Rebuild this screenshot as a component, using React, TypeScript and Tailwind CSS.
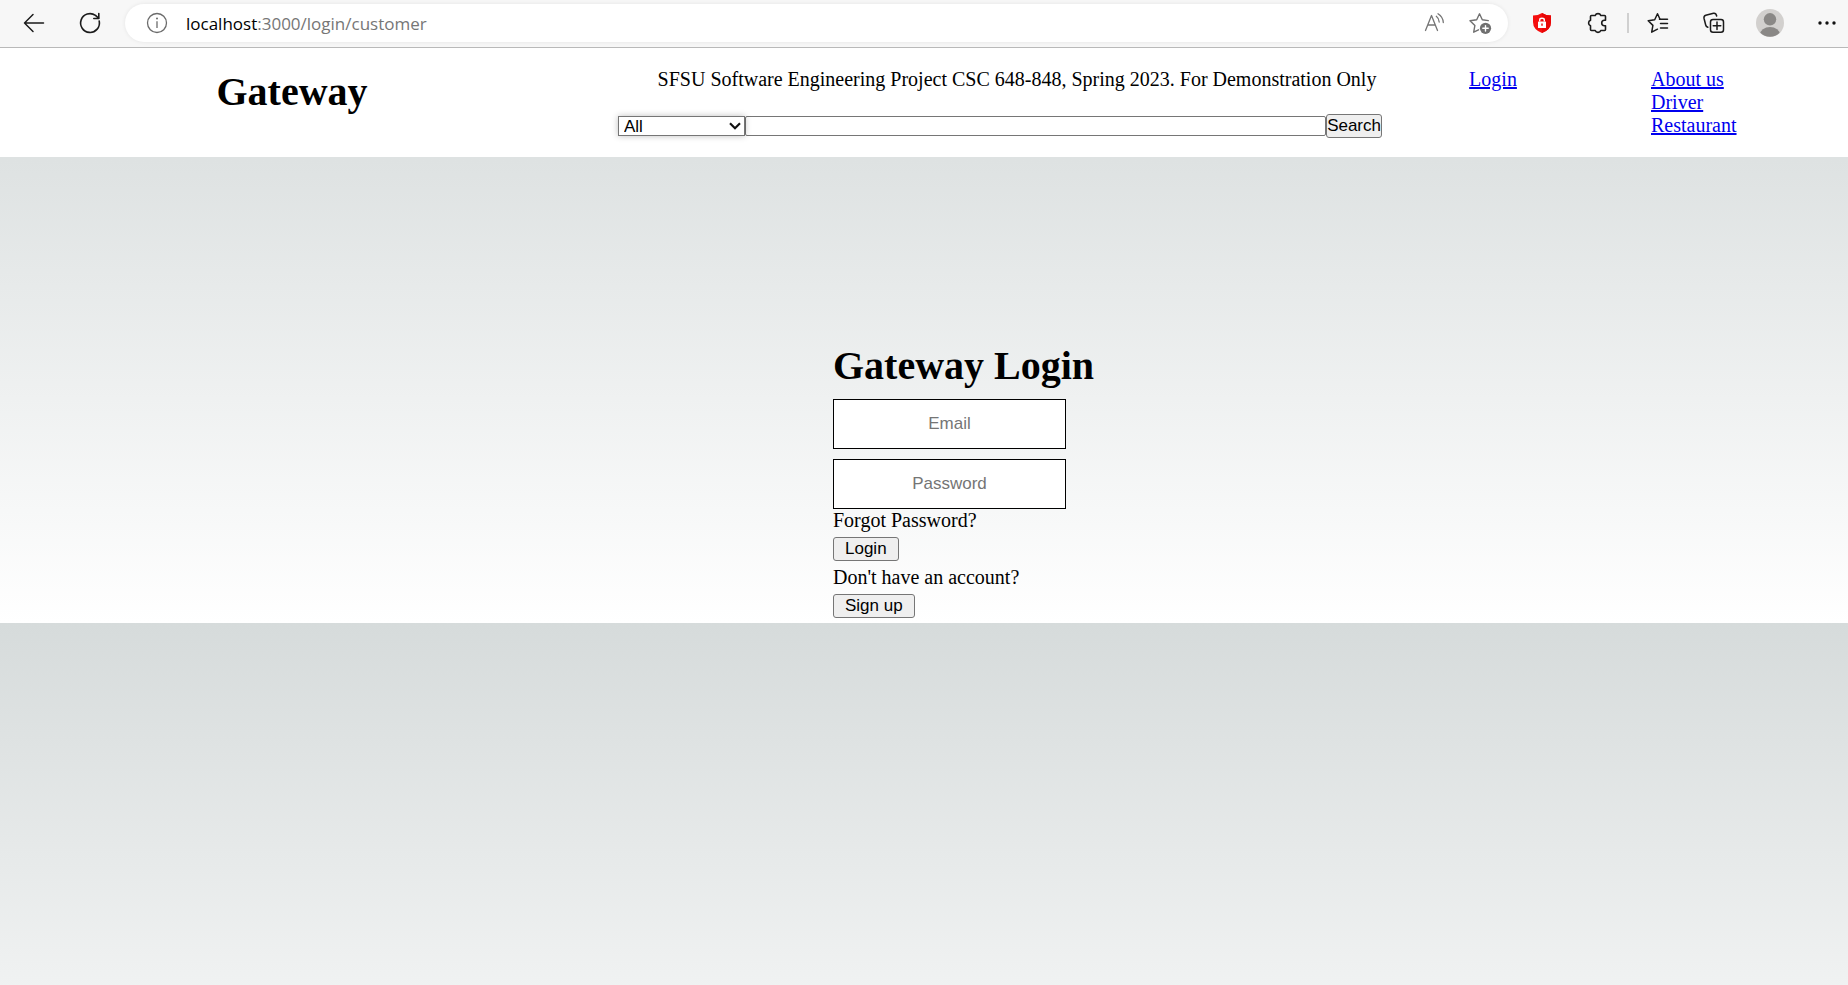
import React from "react";

function ToolbarButton({ label, children }: { label: string; children: React.ReactNode }) {
  return (
    <button type="button" aria-label={label} className="flex h-10 w-14 shrink-0 items-center justify-center">
      {children}
    </button>
  );
}

function BackIcon() {
  return (
    <svg width="24" height="24" viewBox="0 0 24 24" fill="none" stroke="#1b1b1b" strokeWidth="1.500" strokeLinecap="round" strokeLinejoin="round">
      <path d="M21.500 12H2.500M11 3.500L2.500 12l8.500 8.500" />
    </svg>
  );
}

function ReloadIcon() {
  return (
    <svg width="24" height="24" viewBox="0 0 24 24" fill="none" stroke="#1b1b1b" strokeWidth="1.600" strokeLinecap="round" strokeLinejoin="round">
      <path d="M21.200 10A9.400 9.400 0 1 1 17.500 4.400L20.500 7.200" />
      <path d="M20.800 2.500V7.500H15.800" />
    </svg>
  );
}

function InfoIcon() {
  return (
    <svg width="24" height="24" viewBox="0 0 24 24" fill="none" stroke="#6b6b6b" strokeWidth="1.300">
      <circle cx="12" cy="12" r="9.500" />
      <path d="M12 10.200V17" />
      <circle cx="12" cy="7.600" r="1" fill="#6b6b6b" stroke="none" />
    </svg>
  );
}

function ReadAloudIcon() {
  return (
    <svg width="24" height="24" viewBox="0 0 24 24" fill="none" stroke="#757575" strokeWidth="1.300" strokeLinecap="round" strokeLinejoin="round">
      <path d="M2.500 19.500L8.500 4.500L14.500 19.500M4.700 14H12.300" />
      <path d="M13.300 5.300Q16 7.300 16.200 11" />
      <path d="M15 2.800Q20 6 20.300 11.500" />
    </svg>
  );
}

function AddFavoriteIcon() {
  return (
    <svg width="24" height="24" viewBox="0 0 24 24" fill="none" stroke="#707070" strokeWidth="1.400" strokeLinecap="round" strokeLinejoin="round">
      <path d="M20.300 9.600L14.300 8.700L11.500 2.800L8.700 8.700L2 9.700L6.900 14.400L5.700 21.200L10.500 18.800" />
      <circle cx="17.500" cy="17.300" r="5.600" fill="#707070" stroke="none" />
      <path d="M17.500 14.600V20M14.800 17.300H20.200" stroke="#fff" />
    </svg>
  );
}

function ShieldIcon() {
  return (
    <svg width="24" height="24" viewBox="0 0 24 24">
      <path d="M12 2Q16 4.600 21 4.600V11Q21 18.600 12 22Q3 18.600 3 11V4.600Q8 4.600 12 2Z" fill="#f50f0f" />
      <path d="M12 2Q16 4.600 21 4.600V11Q21 18.600 12 22Z" fill="#e80707" />
      <rect x="8" y="10.500" width="8" height="6.500" rx="0.600" fill="#fff" />
      <path d="M9.700 10.500V9Q9.700 7.300 12 7.300Q14.300 7.300 14.300 9V10.500" fill="none" stroke="#fff" strokeWidth="1.400" />
      <path d="M12 12.600V14.800" stroke="#e80707" strokeWidth="1.400" />
    </svg>
  );
}

function PuzzleIcon() {
  return (
    <svg width="24" height="24" viewBox="0 0 24 24" fill="none" stroke="#1b1b1b" strokeWidth="1.600" strokeLinejoin="round">
      <path d="M5.500 4.500H9.200A3 3 0 0 1 14.800 4.500H18.500Q19.500 4.500 19.500 5.500V9.300H18.400A2.700 2.700 0 0 0 18.400 14.700H19.500V18.500Q19.500 19.500 18.500 19.500H14.800A3 3 0 0 1 9.200 19.500H5.500Q4.500 19.500 4.500 18.500V14.800A3 3 0 0 1 4.500 9.200V5.500Q4.500 4.500 5.500 4.500Z" />
    </svg>
  );
}

function FavoritesIcon() {
  return (
    <svg width="24" height="24" viewBox="0 0 24 24" fill="none" stroke="#1b1b1b" strokeWidth="1.500" strokeLinecap="round" strokeLinejoin="round">
      <path d="M14 8.300L11.500 2.800L8.700 8.700L2.200 9.700L6.900 14.400L5.700 21.200L11.500 18.200" />
      <path d="M13.500 8.300H21.500M14.500 12.500H21.500M14.500 17H21.500" />
    </svg>
  );
}

function CollectionsIcon() {
  return (
    <svg width="24" height="24" viewBox="0 0 24 24" fill="none" stroke="#1b1b1b" strokeWidth="1.500" strokeLinecap="round" strokeLinejoin="round">
      <rect x="8.500" y="8.500" width="13" height="12.700" rx="2.500" />
      <path d="M15 11V18.600M11.200 14.800H18.800" />
      <path d="M5.800 16.300Q4 15.700 3.700 14L2 7.200Q1.600 5 3.800 4.300L11.500 2.300Q14 1.900 14.700 5" />
    </svg>
  );
}

function AvatarIcon() {
  return (
    <svg width="28" height="28" viewBox="0 0 28 28">
      <defs>
        <clipPath id="avatar-disc">
          <circle cx="14" cy="14" r="13.700" />
        </clipPath>
      </defs>
      <circle cx="14" cy="14" r="14" fill="#d2d0ce" />
      <circle cx="14" cy="10.300" r="6.200" fill="#8a8886" />
      <ellipse cx="14" cy="25.500" rx="10" ry="7.500" fill="#8a8886" clipPath="url(#avatar-disc)" />
    </svg>
  );
}

function BrowserBar() {
  return (
    <div className="flex h-12 items-center border-b border-[#b9b9b9] bg-[#f7f7f7] pb-px pl-1.5">
      <ToolbarButton label="Back"><BackIcon /></ToolbarButton>
      <ToolbarButton label="Reload"><ReloadIcon /></ToolbarButton>
      <div className="ml-[7px] flex h-[38px] min-w-0 flex-1 items-center rounded-full bg-white pr-4 pl-5 shadow-[0_0_4px_rgba(0,0,0,0.08)]">
        <InfoIcon />
        <div className="ml-[17px] flex-1 truncate font-['Open_Sans','Noto_Sans',sans-serif] text-[17px] text-[#767676]">
          <span className="text-black">localhost</span>:3000/login/customer
        </div>
        <button type="button" aria-label="Read aloud"><ReadAloudIcon /></button>
        <button type="button" aria-label="Add to favorites" className="ml-[21px]"><AddFavoriteIcon /></button>
      </div>
      <div className="ml-1.5 flex shrink-0 items-center">
        <ToolbarButton label="Ad blocker"><ShieldIcon /></ToolbarButton>
        <ToolbarButton label="Extensions"><PuzzleIcon /></ToolbarButton>
        <div className="mx-px h-5 w-0.5 bg-[#d0d0d0]" />
        <ToolbarButton label="Favorites"><FavoritesIcon /></ToolbarButton>
        <ToolbarButton label="Collections"><CollectionsIcon /></ToolbarButton>
        <ToolbarButton label="Profile"><AvatarIcon /></ToolbarButton>
        <button type="button" aria-label="Settings and more" className="ml-2 flex h-10 w-[42px] items-center justify-center">
          <svg width="18" height="4" viewBox="0 0 18 4" fill="#111">
            <circle cx="2" cy="2" r="1.700" />
            <circle cx="9" cy="2" r="1.700" />
            <circle cx="16" cy="2" r="1.700" />
          </svg>
        </button>
      </div>
    </div>
  );
}

const controlFont = "font-['Liberation_Sans',Arial,sans-serif] text-[17px]";
const buttonStyle = "flex h-6 items-center rounded-[3px] border border-[#767676] bg-[#efefef] leading-5 text-black";
const linkStyle = "text-[#0000ee] underline";

function SiteHeader() {
  return (
    <header className="grid grid-cols-[584fr_832fr_154fr_278fr] items-start bg-white pt-5 pb-[19px]">
      <h1 className="text-center text-[40px] leading-[48px] font-bold">Gateway</h1>
      <div className="px-[34px]">
        <p className="pl-[34px] text-center">
          SFSU Software Engineering Project CSC 648-848, Spring 2023. For Demonstration Only
        </p>
        <form className="mt-[23px] flex items-center" onSubmit={(e) => e.preventDefault()}>
          <div className="relative w-[127px] shrink-0">
            <select
              aria-label="Category"
              className={`${controlFont} block h-5 w-full appearance-none border border-[#767676] bg-white pt-px pl-[5px] leading-[18px] shadow-[0_0_6px_rgba(0,0,0,0.25)]`}
            >
              <option>All</option>
            </select>
            <svg className="pointer-events-none absolute top-1.5 right-1" width="12" height="8" viewBox="0 0 12 8" fill="none" stroke="#111" strokeWidth="2.200">
              <path d="M1 1.300L6 6.200L11 1.300" />
            </svg>
          </div>
          <input
            type="text"
            aria-label="Search"
            className={`${controlFont} h-5 min-w-0 flex-1 rounded-[2px] border border-[#767676] bg-white px-0.5`}
          />
          <button type="submit" className={`${controlFont} ${buttonStyle}`}>Search</button>
        </form>
      </div>
      <div className="text-center">
        <a href="#login" className={linkStyle}>Login</a>
      </div>
      <nav className="flex flex-col items-start pl-[81px]">
        <a href="#about" className={linkStyle}>About us</a>
        <a href="#driver" className={linkStyle}>Driver</a>
        <a href="#restaurant" className={linkStyle}>Restaurant</a>
      </nav>
    </header>
  );
}

function LoginForm() {
  const field = "block h-[50px] w-[233px] border border-black bg-white text-center placeholder:text-[#757575]";
  return (
    <main className="grid grid-cols-[833fr_1015fr] pt-[186px] pb-[5px]">
      <form className="col-start-2 flex flex-col items-start" onSubmit={(e) => e.preventDefault()}>
        <h1 className="mb-2.5 text-[40px] leading-[46px] font-bold">Gateway Login</h1>
        <input type="email" aria-label="Email" placeholder="Email" className={`${controlFont} ${field} mb-2.5`} />
        <input type="password" aria-label="Password" placeholder="Password" className={`${controlFont} ${field}`} />
        <p>Forgot Password?</p>
        <button type="submit" className={`${controlFont} ${buttonStyle} my-[5px] px-[11px]`}>Login</button>
        <p>Don't have an account?</p>
        <button type="button" className={`${controlFont} ${buttonStyle} mt-[5px] px-[11px]`}>Sign up</button>
      </form>
    </main>
  );
}

export default function App() {
  return (
    <div className="flex min-h-screen flex-col font-['Liberation_Serif','Times_New_Roman',serif] text-[20px] leading-[23px] text-black">
      <BrowserBar />
      <div className="flex-1 bg-[linear-gradient(#d6dbdb,#ffffff)] bg-[length:100%_575px] bg-repeat-y">
        <SiteHeader />
        <LoginForm />
      </div>
    </div>
  );
}
